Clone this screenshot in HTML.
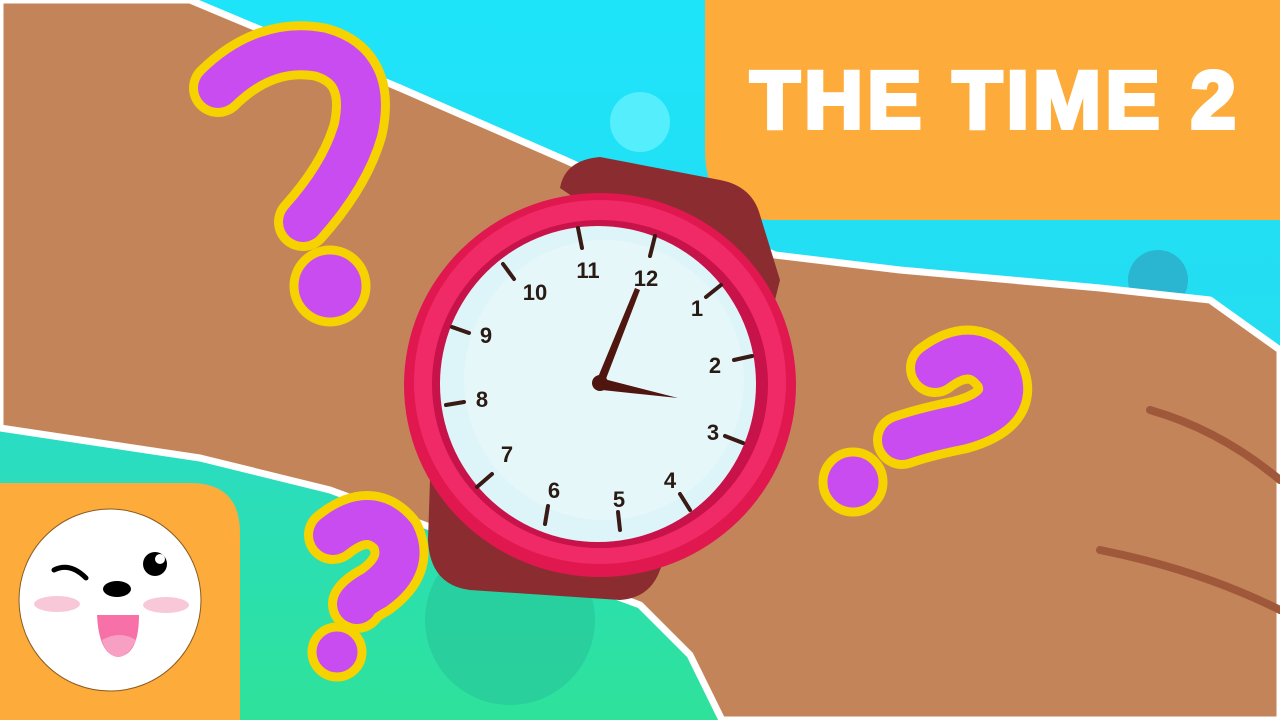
<!DOCTYPE html>
<html><head><meta charset="utf-8"><style>
html,body{margin:0;padding:0;width:1280px;height:720px;overflow:hidden;background:#1fe0f8}
svg{display:block}
</style></head><body>
<svg width="1280" height="720" viewBox="0 0 1280 720" xmlns="http://www.w3.org/2000/svg">
<defs>
<linearGradient id="bg" x1="0" y1="0" x2="0" y2="1">
<stop offset="0" stop-color="#1ee4fa"/><stop offset="1" stop-color="#2bd5e6"/></linearGradient>
<linearGradient id="bg2" x1="0" y1="0" x2="0" y2="1">
<stop offset="0" stop-color="#2adcc4"/><stop offset="1" stop-color="#2ee29a"/></linearGradient>
</defs>
<rect width="1280" height="720" fill="url(#bg)"/>
<circle cx="640" cy="122" r="30" fill="#55eefc"/>
<circle cx="1158" cy="280" r="30" fill="#2ab6d0"/>
<polygon points="0,425 200,455 330,488 430,520 640,600 690,650 725,720 0,720" fill="url(#bg2)"/>
<circle cx="510" cy="620" r="85" fill="#27c49a" opacity="0.6"/>
<!-- arm -->
<polygon points="0,0 190,0 400,88 565,160 775,255 900,270 1100,288 1210,300 1280,350 1280,720 722,720 690,655 640,605 430,527 330,490 200,458 0,428" fill="#c4845a" stroke="#fff" stroke-width="7" stroke-linejoin="round"/>
<path d="M1150,410 Q1220,430 1280,480" stroke="#a0583a" stroke-width="8" fill="none" stroke-linecap="round"/>
<path d="M1100,550 Q1200,570 1280,610" stroke="#a0583a" stroke-width="8" fill="none" stroke-linecap="round"/>
<!-- title box -->
<path d="M705,0 H1280 V220 H775 Q705,220 705,150 Z" fill="#fdab3b"/>
<text x="995" y="128" text-anchor="middle" font-family="Liberation Sans, sans-serif" font-weight="bold" font-size="82" fill="#fff" stroke="#fff" stroke-width="4" letter-spacing="4" textLength="490" lengthAdjust="spacingAndGlyphs">THE TIME 2</text>
<!-- question marks -->
<g fill="none" stroke-linecap="round" stroke-linejoin="round">
<g stroke="#f5d200" stroke-width="58">
<path d="M218,88 Q265,42 320,52 Q372,66 358,130 Q345,175 303,222"/>
<path d="M935,368 Q975,338 1000,375 Q1015,410 960,425 Q925,432 902,440"/>
<path d="M333,535 Q370,505 395,535 Q410,565 375,590 Q360,598 357,604"/>
</g>
<g stroke="#c84cf0" stroke-width="40">
<path d="M218,88 Q265,42 320,52 Q372,66 358,130 Q345,175 303,222"/>
<path d="M935,368 Q975,338 1000,375 Q1015,410 960,425 Q925,432 902,440"/>
<path d="M333,535 Q370,505 395,535 Q410,565 375,590 Q360,598 357,604"/>
</g>
</g>
<g fill="#c84cf0" stroke="#f5d200" stroke-width="9">
<circle cx="330" cy="286" r="36"/>
<circle cx="853" cy="482" r="30"/>
<circle cx="337" cy="652" r="25"/>
</g>
<!-- strap -->
<path d="M560,188 Q565,160 600,157 L720,180 Q752,186 760,215 L780,280 L770,320 L430,480 L428,540 Q430,585 470,590 L620,600 Q650,598 660,570 L770,330 Z" fill="#8a2c30"/>
<!-- case -->
<ellipse cx="600" cy="385" rx="196" ry="192" fill="#e0184f"/>
<ellipse cx="600" cy="382" rx="186" ry="182" fill="#f02a66"/>
<ellipse cx="600" cy="384" rx="168" ry="164" fill="#c8124a"/>
<circle cx="598" cy="384" r="158" fill="#ddf4f8"/>
<circle cx="604" cy="380" r="140" fill="#e6f7fa"/>
<g font-family="Liberation Sans, sans-serif" font-weight="bold" font-size="22" fill="#2a1a14" text-anchor="middle">
<text x="646" y="286">12</text><text x="697" y="316">1</text><text x="715" y="373">2</text>
<text x="713" y="440">3</text><text x="670" y="488">4</text><text x="619" y="507">5</text>
<text x="554" y="498">6</text><text x="507" y="462">7</text><text x="482" y="407">8</text>
<text x="486" y="343">9</text><text x="535" y="300">10</text><text x="588" y="278">11</text>
</g>
<g stroke="#3a1a14" stroke-width="4" stroke-linecap="round">
<line x1="578" y1="228" x2="582" y2="248"/><line x1="655" y1="236" x2="650" y2="256"/>
<line x1="721" y1="285" x2="706" y2="297"/><line x1="752" y1="356" x2="734" y2="360"/>
<line x1="743" y1="443" x2="725" y2="436"/><line x1="690" y1="510" x2="680" y2="494"/>
<line x1="620" y1="530" x2="618" y2="512"/><line x1="545" y1="524" x2="548" y2="506"/>
<line x1="477" y1="487" x2="492" y2="474"/><line x1="446" y1="405" x2="464" y2="402"/>
<line x1="452" y1="327" x2="469" y2="333"/><line x1="503" y1="264" x2="514" y2="279"/>
</g>
<!-- hands -->
<polygon points="596,382 635,288 640,290 604,384" fill="#4e160e"/>
<polygon points="600,378 678,398 602,390" fill="#4e160e"/>
<circle cx="600" cy="383" r="8" fill="#4e160e"/>
<!-- logo -->
<path d="M0,483 H190 Q240,483 240,533 V720 H0 Z" fill="#fdab3b"/>
<circle cx="110" cy="600" r="91" fill="#fff" stroke="#8a5a20" stroke-width="1"/>
<path d="M54,570 Q70,562 86,578" stroke="#000" stroke-width="5" fill="none" stroke-linecap="round"/>
<ellipse cx="117" cy="589" rx="14" ry="8" fill="#000"/>
<circle cx="155" cy="564" r="12" fill="#000"/>
<circle cx="160" cy="559" r="5" fill="#fff"/>
<ellipse cx="57" cy="604" rx="23" ry="8" fill="#f8c8d8"/>
<ellipse cx="166" cy="605" rx="23" ry="8" fill="#f8c8d8"/>
<path d="M97,615 H139 Q139,655 118,657 Q99,655 97,615 Z" fill="#f870a8"/>
<path d="M102,640 Q120,630 136,640 Q128,657 118,657 Q106,655 102,640 Z" fill="#f8a0c4"/>
</svg>
</body></html>
